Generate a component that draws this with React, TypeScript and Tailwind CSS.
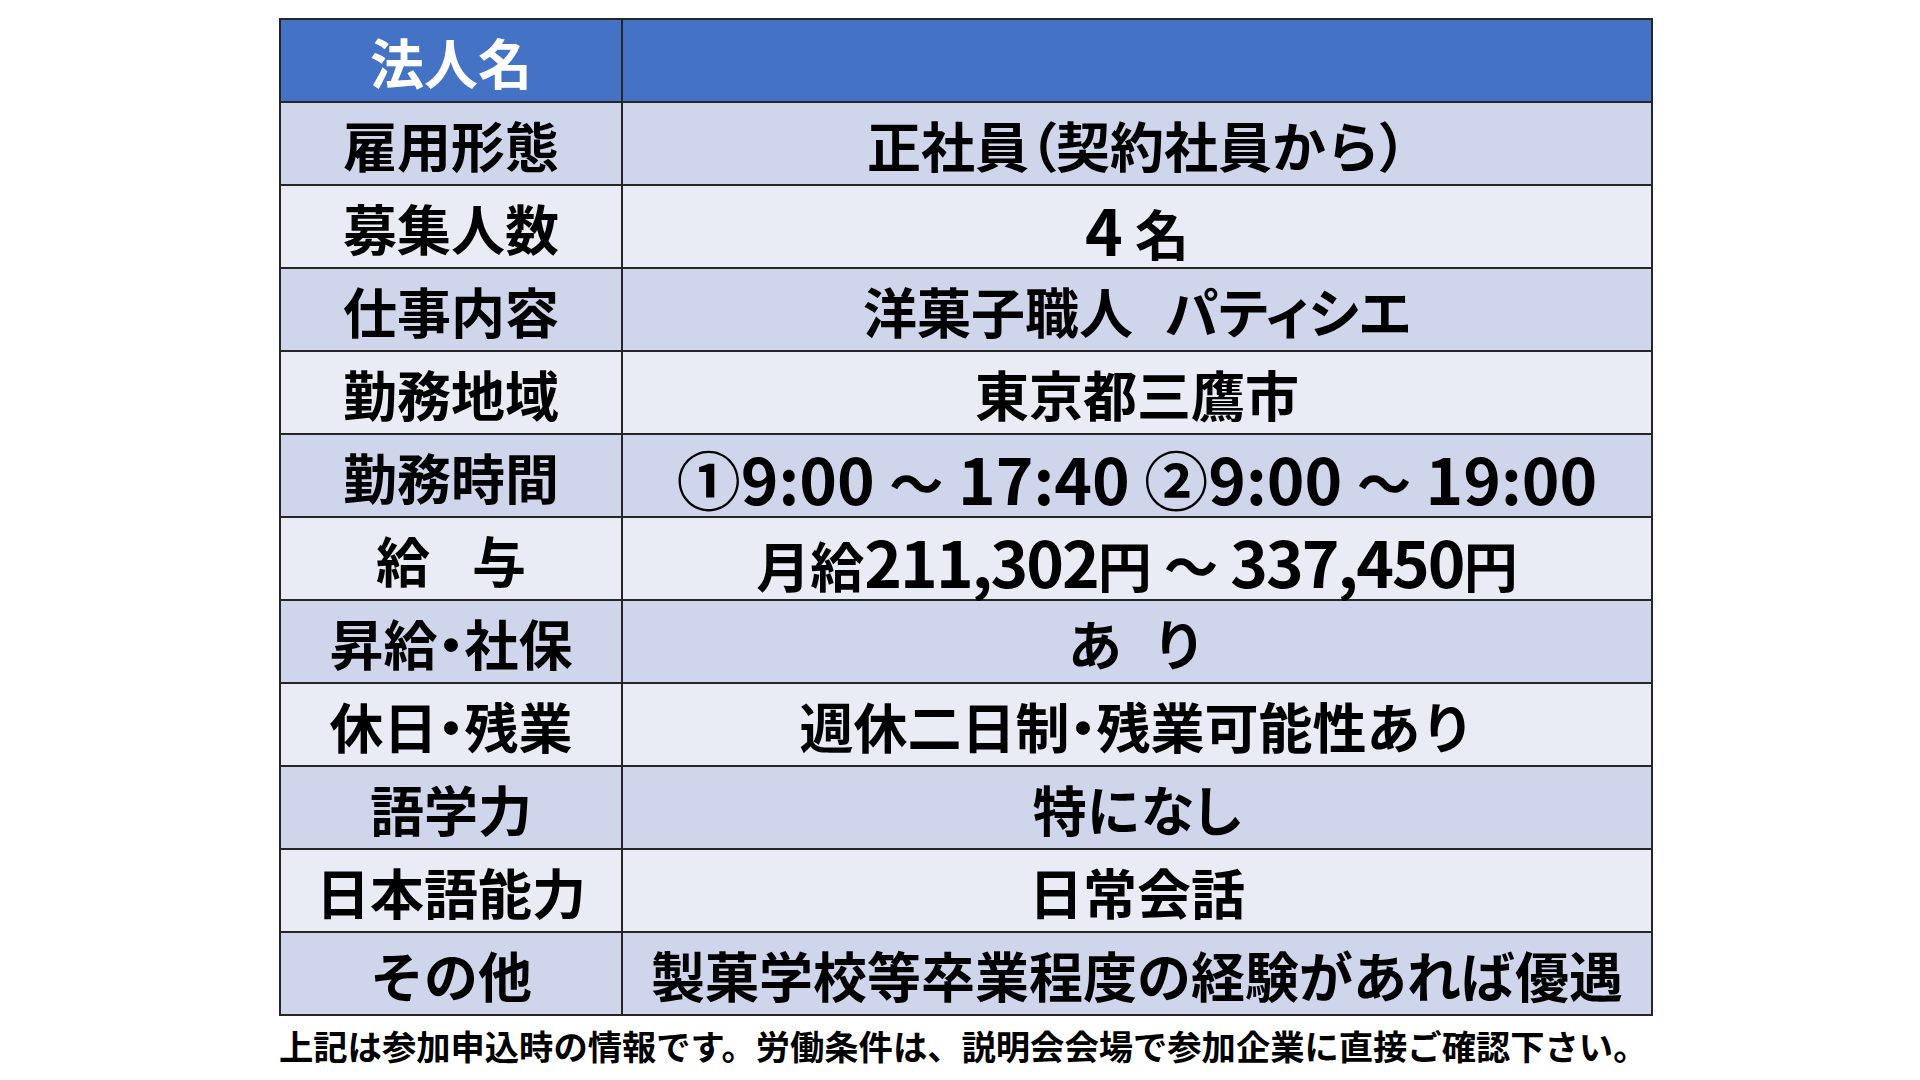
import type { ReactNode } from "react";

// 数字は漢字より一回り大きく見えるので別サイズ
function N({ children, tight }: { children: ReactNode; tight?: boolean }) {
  return <span className={tight ? "text-[64px] tracking-[-2px]" : "text-[64px]"}>{children}</span>;
}

// 括弧・中黒などを詰める
function P({ children }: { children: ReactNode }) {
  return <span className="[font-feature-settings:'palt']">{children}</span>;
}

type Row = { label: ReactNode; value: ReactNode };

const rows: Row[] = [
  { label: "雇用形態", value: <>正社員<P>（</P>契約社員から<P>）</P></> },
  { label: "募集人数", value: <><N>4</N> 名</> },
  {
    label: "仕事内容",
    value: (
      <>
        洋菓子職人<span className="inline-block w-[32px]" />
        <P>パティシエ</P>
      </>
    ),
  },
  { label: "勤務地域", value: "東京都三鷹市" },
  {
    label: "勤務時間",
    value: (
      <>
        <N>①9:00 </N>～<N> 17:40 ②9:00 </N>～<N> 19:00</N>
      </>
    ),
  },
  {
    label: (
      <span className="flex gap-[42px]">
        <span>給</span>
        <span>与</span>
      </span>
    ),
    value: (
      <>
        月給<N tight>211,302</N>円 ～ <N tight>337,450</N>円
      </>
    ),
  },
  {
    label: <>昇給<P>・</P>社保</>,
    value: (
      <span className="flex gap-[30px]">
        <span>あ</span>
        <span>り</span>
      </span>
    ),
  },
  { label: <>休日<P>・</P>残業</>, value: <>週休二日制<P>・</P>残業可能性あり</> },
  { label: "語学力", value: <>特に<P>なし</P></> },
  { label: "日本語能力", value: "日常会話" },
  { label: "その他", value: "製菓学校等卒業程度の経験があれば優遇" },
];

export default function App() {
  return (
    <div className="min-h-screen w-[1920px] bg-white font-['Noto_Sans_CJK_JP',sans-serif] font-bold text-black">
      <div className="ml-[279px] pt-[18px]">
        <div className="grid w-[1374px] grid-cols-[342px_1fr] border-2 border-[#262626]">
          {/* 見出し行 */}
          <div className="flex h-[83px] items-center justify-center border-r-2 border-b-2 border-[#262626] bg-[#4472C4] pt-[3px] text-[54px] leading-none text-white">
            法人名
          </div>
          <div className="h-[83px] border-b-2 border-[#262626] bg-[#4472C4]" />

          {rows.map((r, i) => {
            const last = i === rows.length - 1;
            const bg = i % 2 === 0 ? "bg-[#CFD5EA]" : "bg-[#E9EBF5]";
            const edge = last ? "h-[81px]" : "h-[83px] border-b-2";
            return (
              <div key={i} className="contents">
                <div
                  className={`flex items-center justify-center border-r-2 border-[#262626] pt-[3px] text-[54px] leading-none ${bg} ${edge}`}
                >
                  {r.label}
                </div>
                <div
                  className={`flex items-center justify-center border-[#262626] pt-[3px] text-[54px] leading-none ${bg} ${edge}`}
                >
                  <span className="whitespace-pre">{r.value}</span>
                </div>
              </div>
            );
          })}
        </div>

        <p className="mt-[12px] text-[34.3px] leading-none">
          上記は参加申込時の情報です。労働条件は、説明会会場で参加企業に直接ご確認下さい。
        </p>
      </div>
    </div>
  );
}
